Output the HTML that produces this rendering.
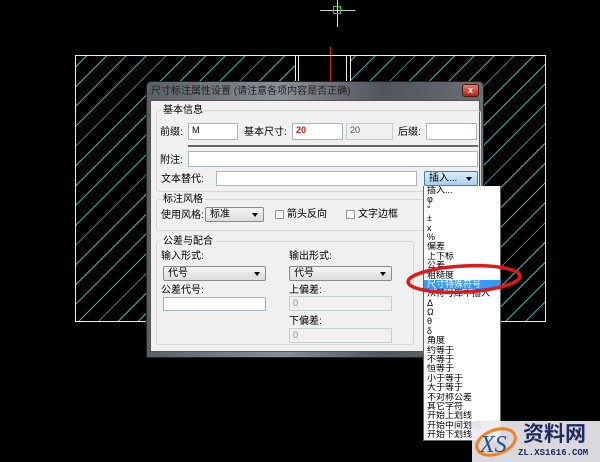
<!DOCTYPE html>
<html><head><meta charset="utf-8"><style>
*{margin:0;padding:0;box-sizing:border-box}
body{width:600px;height:462px;background:#000;position:relative;overflow:hidden;font-family:"Liberation Sans","Noto Sans CJK SC",sans-serif;font-size:10px;color:#000}
.a{position:absolute}
.hatch{background:repeating-linear-gradient(-45deg,transparent 0 13px,#3fb0a8 13px 14px)}
.lbl{position:absolute;font-size:10px;line-height:12px;white-space:nowrap}
.in{position:absolute;background:#fff;border:1px solid #a9b3bf;font-size:9px;padding-left:3px;line-height:13px}
.dis{background:#f0f0f0;border-color:#c8cdd3;color:#888}
.sel{position:absolute;background:linear-gradient(#f4f4f4,#dcdcdc);border:1px solid #8a8a8a;border-radius:2px;font-size:10px;padding-left:4px;line-height:13px}
.sel:after{content:"";position:absolute;right:5px;top:5px;border:3px solid transparent;border-top:4px solid #000}
.grp{position:absolute;border:1px solid #d5d5d5;border-radius:3px}
.cb{position:absolute;width:9px;height:9px;border:1px solid #999;background:#f7f7f7}
.list div{height:9.4px;line-height:9.4px;font-size:9px;padding-left:3px;white-space:nowrap;overflow:hidden}
</style></head><body>
<!-- crosshair -->
<div class="a" style="left:320px;top:10px;width:35px;height:1px;background:#ccc"></div>
<div class="a" style="left:337px;top:0;width:1px;height:27px;background:#ddd"></div>
<div class="a" style="left:333px;top:6px;width:8px;height:8px;border:1px solid #3c3"></div>
<div class="a" style="left:330px;top:47px;width:1px;height:35px;background:#d02020"></div>
<!-- drawing -->
<div class="a hatch" style="left:75px;top:55px;width:221px;height:267px;border:1px solid #eee;border-right:none"></div>
<div class="a hatch" style="left:350px;top:55px;width:196px;height:267px;border:1px solid #eee;border-left:none"></div>
<div class="a" style="left:296px;top:55px;width:54px;height:1px;background:#eee"></div>
<div class="a" style="left:295px;top:55px;width:1px;height:30px;background:#eee"></div>
<div class="a" style="left:298px;top:55px;width:1px;height:30px;background:#eee"></div>
<div class="a" style="left:346px;top:55px;width:1px;height:30px;background:#eee"></div>
<div class="a" style="left:350px;top:55px;width:1px;height:30px;background:#eee"></div>
<!-- dialog -->
<div class="a" style="left:146px;top:81px;width:338px;height:277px;background:linear-gradient(90deg,#5a5f66,#8a9097 40%,#50555c 70%,#6a6f76);border:1px solid #222;border-radius:5px 5px 2px 2px"></div>
<div class="lbl" style="left:151px;top:86px;color:#222;font-size:10px">尺寸标注属性设置 (请注意各项内容是否正确)</div>
<div class="a" style="left:462px;top:84px;width:17px;height:13px;background:linear-gradient(#e08070,#b02818);border:1px solid #511;border-radius:3px;color:#fff;font-size:9px;text-align:center;line-height:11px;font-weight:bold">x</div>
<div class="a" style="left:150px;top:100px;width:330px;height:252px;background:#f0f0f0;border:1px solid #555"></div>
<div class="grp" style="left:156px;top:110px;width:325px;height:82px"></div>
<div class="lbl" style="left:161px;top:105px;background:#f0f0f0;padding:0 2px">基本信息</div>
<div class="lbl" style="left:160px;top:127px">前缀:</div>
<div class="in" style="left:188px;top:123px;width:50px;height:17px">M</div>
<div class="lbl" style="left:244px;top:127px">基本尺寸:</div>
<div class="in" style="left:292px;top:123px;width:51px;height:17px;color:#e01010;font-weight:bold">20</div>
<div class="in dis" style="left:346px;top:123px;width:47px;height:17px;color:#555">20</div>
<div class="lbl" style="left:398px;top:127px">后缀:</div>
<div class="in" style="left:426px;top:123px;width:51px;height:17px"></div>
<div class="a" style="left:188px;top:145px;width:290px;height:3px;border-top:2px solid #666;border-bottom:1px solid #fff"></div>
<div class="lbl" style="left:160px;top:155px">附注:</div>
<div class="in" style="left:188px;top:151px;width:290px;height:16px"></div>
<div class="lbl" style="left:161px;top:174px">文本替代:</div>
<div class="in" style="left:216px;top:171px;width:201px;height:15px"></div>
<div class="sel" style="left:424px;top:171px;width:54px;height:15px;background:linear-gradient(#dcecfc,#a8cdf0);border-color:#3c7fb1">插入...</div>
<div class="grp" style="left:156px;top:199px;width:325px;height:32px"></div>
<div class="lbl" style="left:161px;top:194px;background:#f0f0f0;padding:0 2px">标注风格</div>
<div class="lbl" style="left:161px;top:210px">使用风格:</div>
<div class="sel" style="left:205px;top:207px;width:59px;height:15px">标准</div>
<div class="cb" style="left:275px;top:210px"></div><div class="lbl" style="left:287px;top:209px">箭头反向</div>
<div class="cb" style="left:346px;top:210px"></div><div class="lbl" style="left:358px;top:209px">文字边框</div>
<div class="grp" style="left:156px;top:241px;width:258px;height:104px"></div>
<div class="lbl" style="left:161px;top:236px;background:#f0f0f0;padding:0 2px">公差与配合</div>
<div class="lbl" style="left:161px;top:251px">输入形式:</div>
<div class="lbl" style="left:289px;top:251px">输出形式:</div>
<div class="sel" style="left:163px;top:266px;width:103px;height:15px">代号</div>
<div class="sel" style="left:289px;top:266px;width:103px;height:15px">代号</div>
<div class="lbl" style="left:161px;top:285px">公差代号:</div>
<div class="in" style="left:163px;top:297px;width:103px;height:14px"></div>
<div class="lbl" style="left:289px;top:285px">上偏差:</div>
<div class="in dis" style="left:289px;top:296px;width:103px;height:15px">0</div>
<div class="lbl" style="left:289px;top:316px">下偏差:</div>
<div class="in dis" style="left:289px;top:328px;width:103px;height:15px">0</div>
<!-- dropdown list -->
<div class="a list" style="left:423px;top:186px;width:78px;height:255px;background:#fff;border:1px solid #666;border-top:none">
<div>插入...</div><div>φ</div><div>°</div><div>±</div><div>x</div><div>%</div><div>偏差</div><div>上下标</div><div>公差</div><div>粗糙度</div>
<div style="background:#3399ff;color:#fff">尺寸特殊符号</div><div>从符号库中插入</div><div>Δ</div><div>Ω</div><div>θ</div><div>δ</div><div>角度</div><div>约等于</div><div>不等于</div><div>恒等于</div><div>小于等于</div><div>大于等于</div><div>不对称公差</div><div>其它字符</div><div>开始上划线</div><div>开始中间划线</div><div>开始下划线</div>
</div>
<svg class="a" style="left:0;top:0" width="600" height="462"><ellipse cx="464" cy="279" rx="56" ry="13" fill="none" stroke="#e01818" stroke-width="3.5" transform="rotate(-3 464 279)"/></svg>
<!-- logo -->
<div class="a" style="left:472px;top:421px;width:128px;height:41px;background:rgba(235,235,240,0.92)"></div>
<svg class="a" style="left:472px;top:418px" width="50" height="44"><ellipse cx="24" cy="24" rx="20" ry="12" fill="none" stroke="#f08020" stroke-width="3" transform="rotate(-20 24 24)"/><text x="8" y="34" font-family="Liberation Serif" font-style="italic" font-size="24" fill="#2050a0">XS</text></svg>
<div class="lbl" style="left:523px;top:423px;font-size:21px;line-height:24px;font-weight:bold;color:#1e2a60">资料网</div>
<div class="lbl" style="left:518px;top:448px;font-family:'Liberation Mono',monospace;font-size:9px;line-height:10px;font-weight:bold;color:#1e2a60">ZL.XS1616.COM</div>
</body></html>
